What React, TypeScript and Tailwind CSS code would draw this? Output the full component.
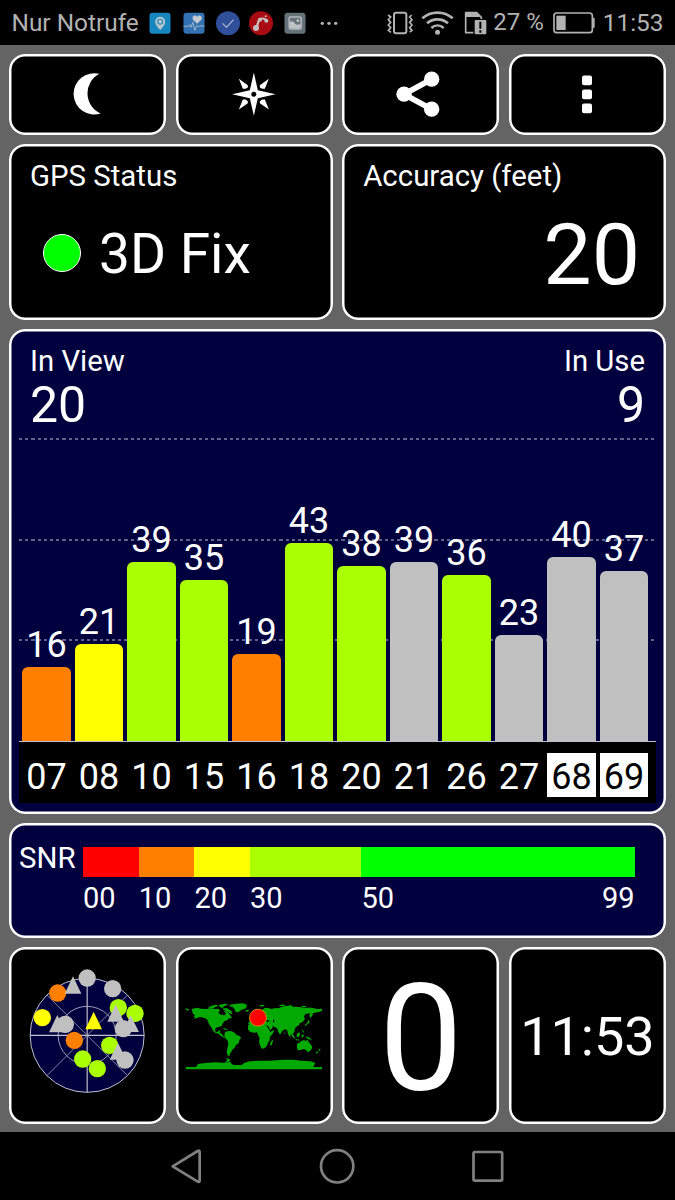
import type { ReactNode } from 'react';

type Satellite = { id: string; snr: number; color: string; inverted?: boolean };

const satellites: Satellite[] = [
  { id: '07', snr: 16, color: 'bg-[#ff8000]' },
  { id: '08', snr: 21, color: 'bg-[#ffff00]' },
  { id: '10', snr: 39, color: 'bg-[#aaff00]' },
  { id: '15', snr: 35, color: 'bg-[#aaff00]' },
  { id: '16', snr: 19, color: 'bg-[#ff8000]' },
  { id: '18', snr: 43, color: 'bg-[#aaff00]' },
  { id: '20', snr: 38, color: 'bg-[#aaff00]' },
  { id: '21', snr: 39, color: 'bg-[#c0c0c0]' },
  { id: '26', snr: 36, color: 'bg-[#aaff00]' },
  { id: '27', snr: 23, color: 'bg-[#c0c0c0]' },
  { id: '68', snr: 40, color: 'bg-[#c0c0c0]', inverted: true },
  { id: '69', snr: 37, color: 'bg-[#c0c0c0]', inverted: true },
];

const PX_PER_DB = 4.6;

function Card({ className = '', children }: { className?: string; children: ReactNode }) {
  return (
    <div className={`overflow-hidden rounded-[16px] shadow-[inset_0_0_0_2.5px_#fff] ${className}`}>{children}</div>
  );
}

function StatusBar() {
  return (
    <div className="flex h-[45px] items-center bg-black pl-[11.500px] pr-[11.500px] text-[24.400px] leading-[45px] text-[#b2b2b2]">
      <span className="w-[135.500px] whitespace-nowrap">Nur Notrufe</span>
      <div className="flex gap-[7.800px]">
        <svg width="26" height="26" viewBox="442.5 28 78 78">
          <rect x="450" y="36" width="63" height="63" rx="9" fill="#1787bf" />
          <path d="M482 88C475 79 467 72 467 63a15 15 0 0 1 30 0c0 9-8 16-15 25z" fill="#bdc6ca" />
          <circle cx="482" cy="63" r="9" fill="#1787bf" />
          <circle cx="482" cy="63" r="5.5" fill="#bdc6ca" />
        </svg>
        <svg width="26" height="26" viewBox="544.5 28 78 78">
          <rect x="552" y="36" width="63" height="63" rx="9" fill="#3272b3" />
          <path d="M593 69C586 62 579 59 579 52c0-8 10-10 14-3 4-7 14-5 14 3 0 7-7 10-14 17z" fill="#c4cbd2" />
          <path d="M552 77h14l4-5 4 8 6-15 6 24 6-15 5 5 4-3h14" fill="none" stroke="#b7c1cb" strokeWidth="2.5" />
        </svg>
        <svg width="26" height="26" viewBox="645.5 28 78 78">
          <circle cx="684.5" cy="67.5" r="36" fill="#2f4f9b" />
          <path d="M668 68l12 12 21-23" fill="none" stroke="#c0c6d3" strokeWidth="3.2" />
        </svg>
        <svg width="26" height="26" viewBox="747 28 78 78">
          <circle cx="786" cy="67.5" r="36" fill="#a90b12" />
          <path d="M772 81c6-9 3-17 9-24 5-5 14-4 20 1" fill="none" stroke="#c4c0c0" strokeWidth="7" />
          <circle cx="771" cy="82" r="9" fill="#c4c0c0" />
          <circle cx="783" cy="57" r="6" fill="#c4c0c0" />
          <circle cx="802" cy="60" r="6" fill="#c4c0c0" />
          <circle cx="800" cy="47" r="3" fill="#c4c0c0" />
        </svg>
        <svg width="26" height="26" viewBox="847.5 28 78 78">
          <rect x="855" y="36" width="63" height="63" rx="9" fill="#66727a" />
          <rect x="869" y="49" width="36" height="36" rx="4" fill="none" stroke="#b5babd" strokeWidth="4.5" />
          <path d="M871 64c7-4 10-2 14 3s6 7 18 3v13h-32z" fill="#c0c4c6" />
          <circle cx="895" cy="60" r="4" fill="#c0c4c6" />
        </svg>
        <svg width="26" height="26" viewBox="949 28 78 78" fill="#b2b2b2">
          <circle cx="968" cy="68" r="5" />
          <circle cx="988" cy="68" r="5" />
          <circle cx="1008" cy="68" r="5" />
        </svg>
      </div>
      <div className="ml-auto flex items-center">
        <svg width="28" height="26" viewBox="46 29 84 78" fill="none" stroke="#b2b2b2">
          <rect x="70" y="37" width="37" height="62" rx="6" strokeWidth="6" />
          <path d="M52 44l8 6-7 8 7 8-7 8 7 8-7 8 8 6M123 44l-6 6 7 8-7 8 7 8-7 8 7 8-7 5" strokeWidth="5" />
        </svg>
        <svg className="ml-[6px]" width="34.700" height="26" viewBox="148 29 104 78" fill="none" stroke="#b2b2b2">
          <path d="M155 54c26-23 65-23 91 0M169 69c18-16 45-16 63 0M182 83c11-10 26-10 37 0" strokeWidth="8" />
          <circle cx="200.500" cy="96" r="7.500" fill="#b2b2b2" stroke="none" />
        </svg>
        <svg className="ml-[8.700px]" width="24.700" height="26" viewBox="278 29 74 78">
          <path d="M286 37h33l14 14v46h-47z" fill="none" stroke="#b2b2b2" strokeWidth="5" strokeLinejoin="round" />
          <path d="M286 36h33l13 14H286z" fill="#b2b2b2" />
          <rect x="309" y="56" width="40" height="48" fill="#000" />
          <rect x="313" y="59" width="35" height="43" rx="3" fill="#b2b2b2" />
          <path d="M330 64v21M330 90v7" stroke="#000" strokeWidth="6" />
        </svg>
        <span className="ml-[5.500px] w-[59.500px] whitespace-nowrap text-[24px]">27 %</span>
        <svg width="42" height="22" viewBox="547 37 126 66">
          <rect x="550" y="40" width="115" height="59" rx="8" fill="none" stroke="#b2b2b2" strokeWidth="5" />
          <rect x="557" y="48" width="28" height="43" fill="#b2b2b2" />
          <path d="M665 54h3q4 0 4 4v23q0 4-4 4h-3z" fill="#b2b2b2" />
        </svg>
        <span className="ml-[8px] whitespace-nowrap">11:53</span>
      </div>
    </div>
  );
}

function Toolbar() {
  return (
    <>
      <Card className="flex items-center justify-center bg-black pb-[1px]">
        <svg width="54" height="54" viewBox="181 51.5 162 162">
          <path d="M296 72A62 62 0 1 0 300 191A66 66 0 0 1 296 72z" fill="#fff" />
        </svg>
      </Card>
      <Card className="flex items-center justify-center bg-black pb-[1px]">
        <svg width="54" height="54" viewBox="680.5 51.5 162 162" fill="#fff">
          <path d="M761 68l12 53 53 12-53 12-12 53-12-53-53-12 53-12z" />
          <path d="M716 87l27 19v7l-7 4h-8zM806 87l-27 19v7l7 4h8zM716 179l27-19v-6l-7-5h-8zM806 179l-27-19v-6l7-5h8z" />
          <circle cx="761" cy="133" r="7.500" fill="#000" />
        </svg>
      </Card>
      <Card className="flex items-center justify-center bg-black pb-[1px]">
        <svg width="54" height="54" viewBox="176 51.5 162 162" fill="#fff">
          <path d="M289 88l-83 45 83 45" fill="none" stroke="#fff" strokeWidth="17" />
          <circle cx="289" cy="88" r="23" />
          <circle cx="206" cy="133" r="23" />
          <circle cx="289" cy="178" r="23" />
        </svg>
      </Card>
      <Card className="flex items-center justify-center bg-black pb-[1px]">
        <svg width="54" height="54" viewBox="675 51.5 162 162" fill="#fff">
          <rect x="741" y="77" width="30" height="29" rx="6" />
          <rect x="741" y="119" width="30" height="29" rx="6" />
          <rect x="741" y="161" width="30" height="29" rx="6" />
        </svg>
      </Card>
    </>
  );
}

function GridLine({ className }: { className: string }) {
  return (
    <div
      className={`absolute left-0 h-[2px] w-[635px] bg-[repeating-linear-gradient(90deg,#626289_0_3.2px,transparent_3.2px_6.2px)] ${className}`}
    />
  );
}

function SignalChart() {
  return (
    <Card className="col-span-4 bg-[#00003f] pt-[16px]">
      <div className="flex justify-between pl-[21px] pr-[21px] text-[29.300px] leading-[32px]">
        <span>In View</span>
        <span>In Use</span>
      </div>
      <div className="flex h-[56px] justify-between pl-[21px] pr-[21px] text-[50px] leading-[56px]">
        <span>20</span>
        <span>9</span>
      </div>
      <div className="relative ml-[10.300px] mt-[5px] h-[304px] w-[636.300px]">
        <GridLine className="top-0" />
        <GridLine className="top-[101px]" />
        <GridLine className="top-[201px]" />
        <div className="relative flex h-full items-end gap-[4.250px] border-b border-[#c0c0c8] pl-[3.100px]">
          {satellites.map((s) => (
            <div key={s.id} className="flex w-[48.250px] shrink-0 flex-col items-center">
              <span className="mb-[4px] text-[36px] leading-[36px]">{s.snr}</span>
              <div className={`w-full rounded-t-[6px] ${s.color}`} style={{ height: s.snr * PX_PER_DB }} />
            </div>
          ))}
        </div>
      </div>
      <div className="ml-[10.300px] flex h-[61px] w-[636.300px] gap-[4.250px] bg-black pl-[3.100px] pt-[11px]">
        {satellites.map((s) => (
          <span
            key={s.id}
            className={`h-[44px] w-[48.250px] shrink-0 text-center text-[36px] leading-[49px] ${s.inverted ? 'bg-white text-black' : ''}`}
          >
            {s.id}
          </span>
        ))}
      </div>
    </Card>
  );
}

function SnrLegend() {
  return (
    <Card className="col-span-4 bg-[#00003f] pl-[11px] pt-[24px] text-[29px]">
      <div className="flex">
        <span className="-ml-px w-[64px] text-[29.400px] leading-[23px]">SNR</span>
        <div className="flex h-[30px] w-[551.500px]">
          <div className="w-[55.700px] bg-[#ff0000]" />
          <div className="w-[55.700px] bg-[#ff8000]" />
          <div className="w-[55.700px] bg-[#ffff00]" />
          <div className="w-[111.400px] bg-[#aaff00]" />
          <div className="flex-1 bg-[#00ff00]" />
        </div>
      </div>
      <div className="ml-[63px] mt-[5px] flex w-[551.500px] leading-[32px]">
        <span className="w-[55.700px]">00</span>
        <span className="w-[55.700px]">10</span>
        <span className="w-[55.700px]">20</span>
        <span className="w-[111.400px]">30</span>
        <span className="flex-1">50</span>
        <span>99</span>
      </div>
    </Card>
  );
}

function SkyPlot() {
  return (
    <svg width="120" height="146.700" viewBox="82 67 360 440">
      <circle cx="262.500" cy="287" r="171" fill="#00003f" stroke="#c0c0d0" strokeWidth="3" />
      <circle cx="262.500" cy="287" r="87" fill="none" stroke="#9c9cb4" strokeWidth="3" />
      <path d="M262.500 116v342M91.500 287h342" stroke="#c0c0d0" strokeWidth="3.500" />
      <path d="M141.500 166l242 242M383.500 166l-242 242" stroke="#a0a0b8" strokeWidth="2.500" />
      <circle cx="174" cy="160" r="26" fill="#ff8000" />
      <g fill="#c0c0c0">
        <path d="M220 110l25 52h-50z" />
        <circle cx="262.500" cy="115" r="26" />
        <circle cx="339" cy="147" r="26" />
      </g>
      <circle cx="356" cy="204" r="26" fill="#aaff00" />
      <circle cx="406" cy="221" r="26" fill="#aaff00" />
      <circle cx="128" cy="234" r="26" fill="#ffff00" />
      <g fill="#c0c0c0">
        <circle cx="371" cy="267" r="26" />
        <path d="M348 194l25 52h-50zM393 227l25 50h-50z" />
        <path d="M173 226l25 52h-50z" />
        <circle cx="197" cy="254" r="26" />
      </g>
      <path d="M282 216l25 53h-50z" fill="#ffff00" />
      <circle cx="224" cy="302" r="26" fill="#ff8000" />
      <circle cx="330" cy="317" r="26" fill="#aaff00" />
      <circle cx="249" cy="358" r="26" fill="#aaff00" />
      <circle cx="293" cy="387" r="26" fill="#aaff00" />
      <g fill="#c0c0c0">
        <path d="M355 310l25 50h-50z" />
        <circle cx="376" cy="361" r="26" />
      </g>
    </svg>
  );
}

function WorldMap() {
  return (
    <svg width="137.300" height="68.300" viewBox="30 65 412 205">
      <g fill="#00aa00">
        <path d="M50 86l16-4 12 3 18 1 8-3 12 3 14-1 5 5-5 7 5 5 7 3 2-12 8-2 8 6 9 12-9 6-2 4-10 4-5 7-3 7-6 2-8 2-6 6 2 7 5 2 5-6 4 1-1 7 6 3 4 7 6 3-4 1-9-5-8-7-10-3-7-7-4-9-7-9-3-9-4-7-9-4-11-2-12 4-9 3 7-5-5-3 4-5-6-3z" />
        <path d="M30 84l12 3-1 4-9-3zM98 81l12-4 10 4-6 4zM106 77l16-4 8 3-8 4zM130 75l14-4 16-1-8 6-8 3 2 5-10-3zM145 83l12 1 12 8 3 8-5 1-8-6-8-4-8-5zM163 108l9 4-7 3z" />
        <path d="M164 73l20-3 20-1 12 4-3 11-14 5-10 7-7-2-4-9-5-5-10-3zM210 90l9-2 4 3-7 4zM227 101l8 4-1 8-8-1zM142 142l12 3 5 4-9-1z" />
        <path d="M151 155l9-3 10 1 9 4 5 6 11 5 3 5-5 7-2 9-8 5-4 8-7 6-3 6-3 5-3 5 2 3-6-1-4-8 2-14 3-12-2-11-8-9-2-9zM154 233l13 5-7 8-12 3 8-8z" />
        <path d="M219 136l6-8 9-4 13-2 7 3 11 2 9-1 5 6 5 11 5 6 9 1-5 10-8 9-1 11-5 7-4 10-6 7-9 1-5-10-3-11 2-10-5-10-3-8-9 1-11-2-7-8z" />
        <path d="M287 185l6-7 1 5-4 12-5-1z" />
        <path d="M227 119l8-4 3-7 11-4 3-8 9-7 9-7 10 1 9 3 13-3 9 1 8-4 13-3 13-1 10 3 16 1 19 2 20 0 17 4 14-1v7l-10 3-10 2-7 1-1 7-7 8-3-7 3-7-15 2-4 8 3 7-7 9-9 4-2 6-6 3-6 6-1 7-3 7-6 4-5 1 3 9-6-6-3-6-3-11-7-2-7 5-5 8-3 2-5-10-3-9-8-3-7 4-8 10-10 4-7-12-5-8-11-1 1-8-8-2-7 5-7-7-4 5-7 1z" />
        <path d="M250 76l13-3 7 2-9 4zM310 76l14-4 9 4-14 2zM340 73l11 1-3 4zM378 77l14 0 2 3-12 0z" />
        <path d="M327 155l5 4-3 2zM348 156l8 9 5 9-4 0-8-9zM362 176l12 2-1 3-11-2zM366 160l7-4 3 5-5 10-6-3zM380 162l7 2-3 8-4-3zM381 145l5 8 2 5-5-3zM392 168l13 4 5 8-8-3-8-4zM400 118l5 8-8 6-6 5-2-3 8-7z" />
        <path d="M366 191l9-5 6-5 6-2 6 4 4-6 4 8 7 8 4 7-3 8-7 6-9-4-6-4-11 3-8 1-2-9zM396 211l5 0-2 6zM431 205l7 2-6 6zM429 212l2 3-7 5-1-4z" />
        <path d="M32 260h31l6-9 21-3 32-2 34 2 6-3 8-1-4 3 9 7 25 0 7-6 17-5 31-2 27 0 23-1 22-2 29 0 24 3 26 2 15 4-4 9-3 4h27v7H32z" />
      </g>
      <g fill="#000">
        <path d="M138 93l7-2 8 7-6 8-5-5zM272 120l7-1 5 4-8 2zM274 136l8 11 4 8 9-5-3-2-6 1-7-13zM291 139l7 7 4-3-8-6zM295 116l3 4-1 8-3-5z" />
      </g>
      <circle cx="249" cy="112" r="25.500" fill="#ff0000" stroke="#e0a000" strokeWidth="2.500" />
    </svg>
  );
}

function NavBar() {
  return (
    <div className="flex h-[68px] items-center justify-center gap-[116px] bg-black pr-[2px]">
      <svg width="34" height="36" viewBox="62 84 102 108" fill="none" stroke="#808080" strokeWidth="8">
        <path d="M73 139L148 93q6-3 6 3v86q0 6-6 3z" strokeLinejoin="round" />
      </svg>
      <svg width="36" height="36" viewBox="508 84 108 108" fill="none" stroke="#808080" strokeWidth="8">
        <circle cx="562.500" cy="139" r="48.500" />
      </svg>
      <svg width="34" height="36" viewBox="962 84 102 108" fill="none" stroke="#808080" strokeWidth="8">
        <rect x="969.500" y="96" width="86" height="86" rx="4" />
      </svg>
    </div>
  );
}

export default function App() {
  return (
    <div className="flex h-[1200px] w-[675px] flex-col overflow-hidden bg-[#646464] font-['Roboto',sans-serif] text-white">
      <StatusBar />
      <main className="grid h-[1087px] grid-cols-4 grid-rows-[81px_176px_485px_115px_177px] gap-x-[9.400px] gap-y-[9px] px-[9px] pt-[9px]">
        <Toolbar />
        <Card className="col-span-2 bg-black px-[21px] pt-[16px]">
          <div className="text-[29.400px] leading-[32px]">GPS Status</div>
          <div className="mt-[32px] flex h-[60px] items-center pl-[13px]">
            <div className="mb-[2px] mr-[18px] size-[38px] rounded-full border border-white bg-[#00ff00]" />
            <span className="text-[55px] leading-[60px]">3D Fix</span>
          </div>
        </Card>
        <Card className="col-span-2 bg-black px-[21px] pt-[16px]">
          <div className="text-[29.400px] leading-[32px]">Accuracy (feet)</div>
          <div className="mt-[13px] pr-[5px] text-right text-[86px] leading-[100px]">20</div>
        </Card>
        <SignalChart />
        <SnrLegend />
        <Card className="flex items-center justify-center bg-black pr-[1px]">
          <SkyPlot />
        </Card>
        <Card className="flex items-center justify-center bg-black pr-[1px] pt-[1px]">
          <WorldMap />
        </Card>
        <Card className="flex items-center justify-center bg-black pt-[7px] text-[149px] leading-[170px]">0</Card>
        <Card className="flex items-center justify-center bg-black pt-[2px] text-[54px] leading-[170px]">11:53</Card>
      </main>
      <NavBar />
    </div>
  );
}
